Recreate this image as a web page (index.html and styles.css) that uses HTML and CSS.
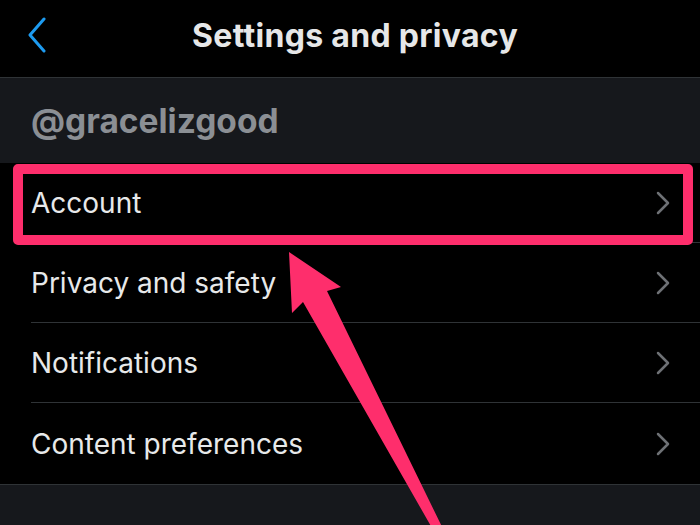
FILE: index.html
```html
<!DOCTYPE html>
<html lang="en">
<head>
  <meta charset="UTF-8">
  <meta name="viewport" content="width=device-width, initial-scale=1.0">
  <title>Settings and privacy</title>
  <link rel="stylesheet" href="styles.css">
</head>
<body>
  <div class="screen">
    <header class="nav">
      <svg class="back" width="20" height="36" viewBox="0 0 20 36">
        <path d="M17 2 L3 18 L17 34" fill="none" stroke="#1d9bf0" stroke-width="3" stroke-linecap="round" stroke-linejoin="round"/>
      </svg>
      <h1>Settings and privacy</h1>
    </header>

    <div class="section-head">@gracelizgood</div>

    <ul class="menu">
      <li class="menu-item">
        <span>Account</span>
        <svg class="chevron" width="14" height="24" viewBox="0 0 14 24"><path d="M2 2 L12 12 L2 22" /></svg>
        <div class="highlight"></div>
      </li>
      <li class="menu-item">
        <span>Privacy and safety</span>
        <svg class="chevron" width="14" height="24" viewBox="0 0 14 24"><path d="M2 2 L12 12 L2 22" /></svg>
      </li>
      <li class="menu-item">
        <span>Notifications</span>
        <svg class="chevron" width="14" height="24" viewBox="0 0 14 24"><path d="M2 2 L12 12 L2 22" /></svg>
      </li>
      <li class="menu-item">
        <span>Content preferences</span>
        <svg class="chevron" width="14" height="24" viewBox="0 0 14 24"><path d="M2 2 L12 12 L2 22" /></svg>
      </li>
    </ul>

    <div class="section-foot"></div>

    <!-- annotation arrow drawn over the screenshot -->
    <svg class="arrow" width="700" height="525" viewBox="0 0 700 525">
      <polygon points="289,252 341,287 327,291 446,535 436,535 303,302 292,313" fill="#fe2e6c"/>
    </svg>
  </div>
</body>
</html>
```

FILE: styles.css
```css
body {
  margin: 0;
  background-color: #000;
  font-family: Inter, "Liberation Sans", Arial, sans-serif;
  color: #e7e9ea;
}
.screen {
  position: relative;
  width: 700px;
  height: 525px;
  overflow: hidden;
  display: flex;
  flex-direction: column;
  background-color: #000;
}
.nav {
  height: 71px;
  padding-bottom: 6px;
  padding-left: 10px;
  flex: none;
  display: flex;
  align-items: center;
  justify-content: center;
  border-bottom: 1px solid #2f3336;
  position: relative;
}
.nav h1 {
  margin: 0;
  font-size: 32px;
  font-weight: 700;
  letter-spacing: 0.3px;
  color: #e6e7e8;
}
.back {
  position: absolute;
  left: 27px;
  top: 17px;
}
.section-head {
  height: 85px;
  flex: none;
  display: flex;
  align-items: center;
  padding-left: 31px;
  background-color: #16181c;
  font-size: 33.5px;
  font-weight: 700;
  color: #8b8f94;
}
.menu {
  list-style: none;
  margin: 0;
  padding: 0;
  flex: none;
}
.menu-item {
  position: relative;
  height: 79px;
  margin-left: 31px;
  padding-right: 30px;
  display: flex;
  align-items: center;
  justify-content: space-between;
  border-bottom: 1px solid #2f3336;
  font-size: 28px;
}
.menu-item:last-child {
  border-bottom: none;
  height: 81px;
}
.chevron path {
  fill: none;
  stroke: #6e7175;
  stroke-width: 2.5;
  stroke-linecap: round;
  stroke-linejoin: round;
}
.highlight {
  position: absolute;
  left: -18px;
  top: 1px;
  width: 660px;
  height: 61px;
  border: 10px solid #fe2e6c;
  border-radius: 5px;
}
.section-foot {
  flex: 1;
  background-color: #16181c;
  border-top: 1px solid #2f3336;
}
.arrow {
  position: absolute;
  left: 0;
  top: 0;
  pointer-events: none;
}
```
